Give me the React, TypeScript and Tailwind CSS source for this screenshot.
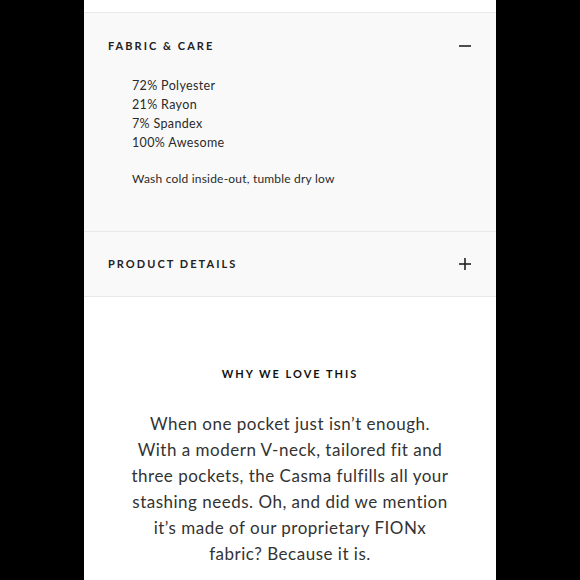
const FABRIC_LINES = ['72% Polyester', '21% Rayon', '7% Spandex', '100% Awesome']

const STORY_LINES = [
  'When one pocket just isn’t enough.',
  'With a modern V-neck, tailored fit and',
  'three pockets, the Casma fulfills all your',
  'stashing needs. Oh, and did we mention',
  'it’s made of our proprietary FIONx',
  'fabric? Because it is.',
]

function ToggleIcon({ open }: { open: boolean }) {
  return (
    <svg width="12" height="12" viewBox="0 0 12 12" className="mr-[1px] text-[#222]" aria-hidden="true">
      <path d="M0 6h12" stroke="currentColor" strokeWidth="1.6" />
      {open ? null : <path d="M6 0v12" stroke="currentColor" strokeWidth="1.6" />}
    </svg>
  )
}

function SectionHeader({ title, open }: { title: string; open: boolean }) {
  return (
    <div className="flex w-full items-center justify-between">
      <h3 className="text-[11px] font-bold uppercase tracking-[2.05px] text-[#222]">
        {title}
      </h3>
      <ToggleIcon open={open} />
    </div>
  )
}

export default function App() {
  return (
    <div
      className="flex h-[580px] w-[580px] justify-center overflow-hidden bg-black"
      style={{ fontFamily: 'Lato, "Open Sans", sans-serif' }}
    >
      <div className="flex w-[412px] flex-col bg-white">
        <div className="h-[12px] shrink-0 bg-white" />

        <section className="border-t border-[#e8e8e8] bg-[#f9f9f9] px-[24px] pb-[43px] pt-[23px]">
          <div className="flex h-[20px] items-center">
            <SectionHeader title="Fabric & Care" open />
          </div>
          <ul className="ml-[24px] mt-[20px] text-[12.5px] leading-[19px] tracking-[0.35px] text-[#2a2a2a]">
            {FABRIC_LINES.map((line) => (
              <li key={line}>{line}</li>
            ))}
          </ul>
          <p className="ml-[24px] mt-[17px] text-[12px] leading-[19px] tracking-[0.2px] text-[#2a2a2a]">
            Wash cold inside-out, tumble dry low
          </p>
        </section>

        <section className="flex h-[66px] shrink-0 items-center border-y border-[#e8e8e8] bg-[#f9f9f9] px-[24px]">
          <SectionHeader title="Product Details" open={false} />
        </section>

        <section className="flex flex-col items-center pt-[67px]">
          <h2 className="text-[11px] font-bold uppercase leading-[20px] tracking-[2px] text-[#111]">
            Why we love this
          </h2>
          <p className="mt-[27px] text-center text-[17px] leading-[26px] tracking-[0.5px] text-[#333]">
            {STORY_LINES.map((line) => (
              <span key={line} className="block whitespace-nowrap">
                {line}
              </span>
            ))}
          </p>
        </section>
      </div>
    </div>
  )
}
